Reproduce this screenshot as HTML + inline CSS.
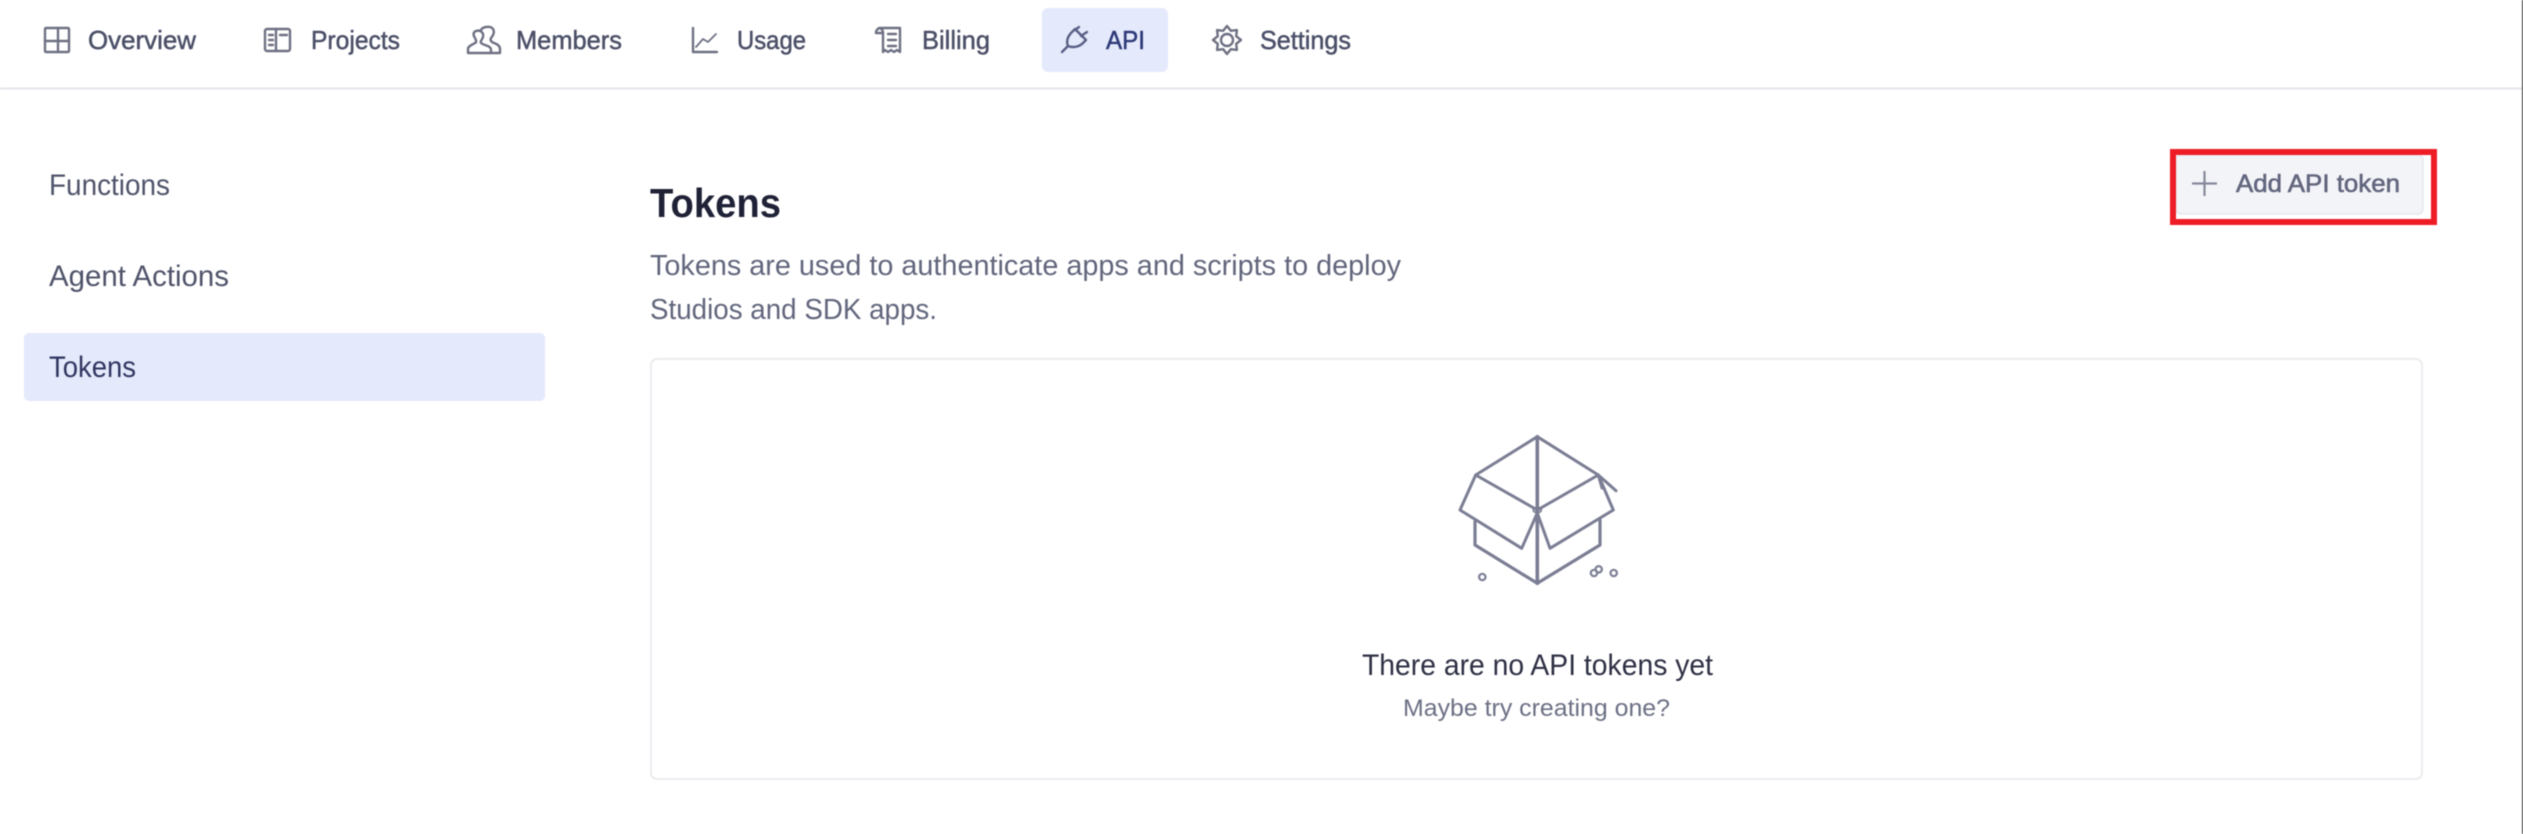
<!DOCTYPE html>
<html lang="en">
<head>
<meta charset="utf-8">
<title>API Tokens</title>
<style>
html,body{margin:0;padding:0;background:#fff;width:2523px;height:834px;overflow:hidden}
svg{position:absolute;left:0;top:0;display:block;filter:blur(.6px)}
text{font-family:"Liberation Sans",sans-serif}
.nav{font-size:26px;fill:#4c5068;stroke:#4c5068;stroke-width:.5px}
.ic{fill:none;stroke:#6e7183;stroke-width:2.4;stroke-linejoin:round;stroke-linecap:round}
.side{font-size:30px;fill:#50546a}
.desc{font-size:29px;fill:#62667c}
.bx{fill:none;stroke:#7b7e94;stroke-width:3;stroke-linejoin:round;stroke-linecap:round}
</style>
</head>
<body>
<svg width="2523" height="834" viewBox="0 0 2523 834" xmlns="http://www.w3.org/2000/svg">
  <rect width="2523" height="834" fill="#fff"/>
  <!-- top nav -->
  <rect x="0" y="87.500" width="2522" height="2" fill="#e4e5ea"/>
  <rect x="1042" y="8" width="126" height="64" rx="6" fill="#e4eafb"/>

  <!-- overview icon -->
  <g class="ic">
    <rect x="45" y="28" width="24" height="24" rx="1"/>
    <path d="M45 41H69M58 28V52"/>
  </g>
  <text class="nav" x="88" y="49" textLength="108" lengthAdjust="spacingAndGlyphs">Overview</text>

  <!-- projects icon -->
  <g class="ic">
    <rect x="265" y="29" width="25" height="22" rx="2"/>
    <path d="M276 29V51M269 35H273M269 40H273M269 45H273M280 35H287"/>
  </g>
  <text class="nav" x="311" y="49" textLength="89" lengthAdjust="spacingAndGlyphs">Projects</text>

  <!-- members icon -->
  <g class="ic" stroke-width="2">
    <path d="M468 53V49C468 46 472 45 475 43C477 42 476 40 475 38C473 35 473 32 476 31C479 30 482 31 483 34C484 37 482 39 481 41C480 43 482 44 485 45C488 46 491 47 491 50V53Z"/>
    <path d="M481 30C483 26 491 26 493 29C495 32 493 36 491 38C490 40 491 42 494 43C497 44 500 46 500 49V53H491"/>
  </g>
  <text class="nav" x="516" y="49" textLength="106" lengthAdjust="spacingAndGlyphs">Members</text>

  <!-- usage icon -->
  <g class="ic">
    <path d="M693 28V52H717"/>
    <path d="M696 47L703 39L708 42L716 34" stroke-width="1.8"/>
  </g>
  <text class="nav" x="737" y="49" textLength="69" lengthAdjust="spacingAndGlyphs">Usage</text>

  <!-- billing icon -->
  <g class="ic" stroke-width="2">
    <path d="M876 33C876 30 878 28 881 28H900V52L897 50L894 52L891 50L888 52L885 50L883 52V33C883 30 881 28 879 28"/>
    <path d="M876 33H883M888 34H896M888 40H896M888 46H896"/>
  </g>
  <text class="nav" x="922" y="49" textLength="68" lengthAdjust="spacingAndGlyphs">Billing</text>

  <!-- api plug icon -->
  <g class="ic" style="stroke:#5a5f86" stroke-width="2">
    <path d="M1062 52L1068 46"/>
    <path d="M1068 46C1066 41 1068 36 1072 32L1075 29L1086 40L1083 43C1079 47 1073 48 1068 46Z"/>
    <path d="M1075 30L1079 27M1081 36L1087 32"/>
  </g>
  <text class="nav" x="1106" y="49" textLength="39" lengthAdjust="spacingAndGlyphs" style="fill:#2f3a78;stroke:#2f3a78">API</text>

  <!-- settings icon -->
  <g class="ic" stroke-width="2">
    <path d="M1227 26L1230.800 30.800L1236.900 30.100L1236.200 36.200L1241 40L1236.200 43.800L1236.900 49.900L1230.800 49.200L1227 54L1223.200 49.200L1217.100 49.900L1217.800 43.800L1213 40L1217.800 36.200L1217.100 30.100L1223.200 30.800Z"/>
    <circle cx="1227" cy="40" r="6"/>
  </g>
  <text class="nav" x="1260" y="49" textLength="91" lengthAdjust="spacingAndGlyphs">Settings</text>

  <!-- sidebar -->
  <rect x="24" y="333" width="521" height="68" rx="5" fill="#e4eafb"/>
  <text class="side" x="49" y="195" textLength="121" lengthAdjust="spacingAndGlyphs">Functions</text>
  <text class="side" x="49" y="286" textLength="180" lengthAdjust="spacingAndGlyphs">Agent Actions</text>
  <text class="side" x="49" y="377" textLength="87" lengthAdjust="spacingAndGlyphs" style="fill:#2f3560">Tokens</text>

  <!-- main heading -->
  <text x="650" y="217" font-size="41" font-weight="700" fill="#1f2136" textLength="131" lengthAdjust="spacingAndGlyphs">Tokens</text>
  <text class="desc" x="650" y="275" textLength="751" lengthAdjust="spacingAndGlyphs">Tokens are used to authenticate apps and scripts to deploy</text>
  <text class="desc" x="650" y="319" textLength="287" lengthAdjust="spacingAndGlyphs">Studios and SDK apps.</text>

  <!-- add button -->
  <rect x="2176" y="155" width="247" height="59" rx="5" fill="#f3f4f8" stroke="#e6e7ee" stroke-width="1.500"/>
  <path d="M2192 183.500H2217M2204.500 171V196" stroke="#85889a" stroke-width="2.200" fill="none"/>
  <text x="2236" y="192" font-size="25" fill="#62667e" stroke="#62667e" stroke-width=".6" textLength="164" lengthAdjust="spacingAndGlyphs">Add API token</text>
  <rect x="2173" y="152" width="261" height="70" fill="none" stroke="#ee1c25" stroke-width="6"/>

  <!-- empty state card -->
  <rect x="651" y="359" width="1771" height="420" rx="6" fill="#fff" stroke="#ebecef" stroke-width="2"/>

  <!-- box illustration -->
  <g class="bx">
    <path d="M1537.300 436.700L1475.700 475L1537.300 510L1598.300 475Z"/>
    <path d="M1537.300 436.700V583.300" stroke-width="3.600"/>
    <path d="M1475.700 475L1460 510L1521.700 548.300L1537.300 513L1550 548.300L1613.300 510L1598.300 475"/>
    <path d="M1475 521.700V545L1537.300 583.300L1600 545V520" stroke-width="3.200"/>
    <path d="M1598.300 475L1616 490.700M1598.300 475L1602 488"/>
    <ellipse cx="1537.300" cy="510" rx="4" ry="2.600" stroke-width="1.800"/>
    <circle cx="1482.300" cy="577" r="3.200" stroke-width="2.200"/>
    <circle cx="1594" cy="573" r="3.200" stroke-width="2.200"/>
    <circle cx="1598.700" cy="569.300" r="3.200" stroke-width="2.200"/>
    <circle cx="1613.700" cy="573" r="3.200" stroke-width="2.200"/>
  </g>

  <text x="1362" y="675" font-size="30" fill="#2e3044" textLength="351" lengthAdjust="spacingAndGlyphs">There are no API tokens yet</text>
  <text x="1403" y="716" font-size="24" fill="#6c7084" textLength="267" lengthAdjust="spacingAndGlyphs">Maybe try creating one?</text>

  <!-- right edge line -->
  <rect x="2522" y="0" width="1" height="834" fill="#2b2b2b"/>
</svg>
</body>
</html>
